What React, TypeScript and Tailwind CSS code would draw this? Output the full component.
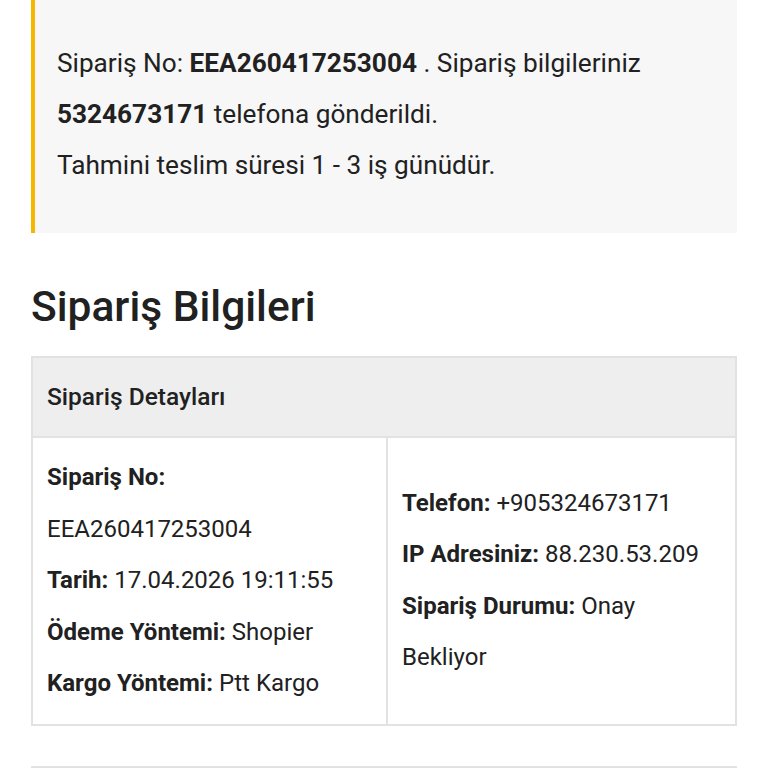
import React from 'react';

const Row = ({ label, value }: { label: string; value?: string }) => (
  <p className="leading-[51.5px]">
    <span className="font-bold">{label}</span>
    {value ? <span> {value}</span> : null}
  </p>
);

const App = () => {
  return (
    <div className="min-h-screen bg-white px-[31px] text-[#212121]" style={{ fontFamily: 'Roboto, "Liberation Sans", sans-serif' }}>
      {/* Bilgilendirme kutusu */}
      <div className="border-l-4 border-[#f5b700] bg-[#f7f7f7] pl-[22px] pr-4 pt-[38px] pb-[42px] text-[26.2px] leading-[51px]">
        <p>
          Sipariş No: <span className="font-bold">EEA260417253004</span> . Sipariş bilgileriniz{' '}
          <span className="font-bold">5324673171</span> telefona gönderildi.
        </p>
        <p>Tahmini teslim süresi 1 - 3 iş günüdür.</p>
      </div>

      <h2 className="mt-[50px] mb-[25px] text-[42.5px] font-medium leading-[48px]">Sipariş Bilgileri</h2>

      {/* Sipariş detayları tablosu */}
      <div className="border-2 border-[#e2e2e2] text-[24px]">
        <div className="flex h-[80px] items-center border-b-2 border-[#e2e2e2] bg-[#eeeeee] px-[14px] text-[24.5px] font-medium">
          Sipariş Detayları
        </div>
        <div className="grid grid-cols-[355px_1fr]">
          <div className="border-r-2 border-[#e2e2e2] px-[14px] py-[14px]">
            <Row label="Sipariş No:" />
            <p className="leading-[51.5px]">EEA260417253004</p>
            <Row label="Tarih:" value="17.04.2026 19:11:55" />
            <Row label="Ödeme Yöntemi:" value="Shopier" />
            <Row label="Kargo Yöntemi:" value="Ptt Kargo" />
          </div>
          <div className="flex flex-col justify-center px-[14px] py-[14px]">
            <Row label="Telefon:" value="+905324673171" />
            <Row label="IP Adresiniz:" value="88.230.53.209" />
            <p className="leading-[51.5px]">
              <span className="font-bold">Sipariş Durumu:</span> Onay
              <br />
              Bekliyor
            </p>
          </div>
        </div>
      </div>

      <div className="mt-[40px] h-[40px] border-2 border-b-0 border-[#e2e2e2]"></div>
    </div>
  );
};

export default App;
